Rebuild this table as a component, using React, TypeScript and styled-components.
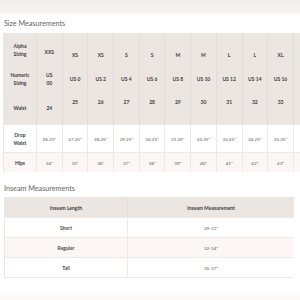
import styled, { createGlobalStyle } from "styled-components";

const GlobalStyle = createGlobalStyle`
    html, body {
        margin: 0;
        padding: 0;
        background: #ffffff;
        overflow: hidden;
        font-family: "Lato", "Liberation Sans", sans-serif;
    }
`;

type SizeCol = { alpha: string; num: string; waist: string; drop: string; hips: string };

const sizes: SizeCol[] = [
    { alpha: "XXS", num: "US\n00", waist: "24", drop: '26.25"', hips: '34"' },
    { alpha: "XS", num: "US 0", waist: "25", drop: '27.25"', hips: '35"' },
    { alpha: "XS", num: "US 2", waist: "26", drop: '28.25"', hips: '36"' },
    { alpha: "S", num: "US 4", waist: "27", drop: '29.25"', hips: '37"' },
    { alpha: "S", num: "US 6", waist: "28", drop: '30.25"', hips: '38"' },
    { alpha: "M", num: "US 8", waist: "29", drop: '31.25"', hips: '39"' },
    { alpha: "M", num: "US 10", waist: "30", drop: '32.25"', hips: '40"' },
    { alpha: "L", num: "US 12", waist: "31", drop: '33.25"', hips: '41"' },
    { alpha: "L", num: "US 14", waist: "32", drop: '34.25"', hips: '42"' },
    { alpha: "XL", num: "US 16", waist: "33", drop: '35.25"', hips: '43"' },
];

type Row = {
    label: string;
    key: keyof SizeCol;
    tone: "head" | "plain" | "tint";
    shift: number;
    firstShift: number;
};

const rows: Row[] = [
    { label: "Alpha Sizing", key: "alpha", tone: "head", shift: 5, firstShift: 2 },
    { label: "Numeric Sizing", key: "num", tone: "head", shift: 0, firstShift: 0 },
    { label: "Waist", key: "waist", tone: "head", shift: -6, firstShift: 0 },
    { label: "Drop Waist", key: "drop", tone: "plain", shift: 0, firstShift: 0 },
    { label: "Hips", key: "hips", tone: "tint", shift: 0, firstShift: 0 },
];

const inseam = [
    { length: "Short", measure: '29-31"' },
    { length: "Regular", measure: '32-34"' },
    { length: "Tall", measure: '35-37"' },
];

const tones = {
    head: "#ece6e2",
    plain: "#ffffff",
    tint: "#fcf7f5",
};

const App = () => {
    return (
        <Page>
            <GlobalStyle />
            <TopShade />
            <Section>
                <Title>Size Measurements</Title>
                <SizeTable>
                    {rows.map((r) => [
                        <Cell key={r.label} $tone={r.tone} $label $headRow={r.tone === "head"}>
                            {r.label}
                        </Cell>,
                        ...sizes.map((s, i) => (
                            <Cell
                                key={r.label + i}
                                $tone={r.tone}
                                $headRow={r.tone === "head"}
                                $shift={i === 0 ? r.firstShift : r.shift}
                            >
                                {s[r.key]}
                            </Cell>
                        )),
                        <Cell key={r.label + "-more"} $tone={r.tone} $headRow={r.tone === "head"} />,
                    ])}
                </SizeTable>

                <Title $gap>Inseam Measurements</Title>
                <InseamTable>
                    <InCell $tone="head" $bold>Inseam Length</InCell>
                    <InCell $tone="head" $bold>Inseam Measurement</InCell>
                    {inseam.map((r, i) => [
                        <InCell key={r.length} $tone={i === 1 ? "tint" : "plain"} $bold>
                            {r.length}
                        </InCell>,
                        <InCell key={r.measure} $tone={i === 1 ? "tint" : "plain"}>
                            {r.measure}
                        </InCell>,
                    ])}
                </InseamTable>
            </Section>
            <BottomShade />
        </Page>
    );
};

export default App;

const Page = styled.div`
    width: 300px;
    height: 300px;
    overflow: hidden;
    display: flex;
    flex-direction: column;
`;

const TopShade = styled.div`
    height: 16px;
    flex-shrink: 0;
    background: linear-gradient(#f1edeb, #f5f2f0 75%, #ffffff);
`;

const BottomShade = styled.div`
    flex: 1;
    background: linear-gradient(#ffffff, #ffffff 40%, #fcfaf9);
`;

const Section = styled.div`
    padding-left: 4px;
    display: flex;
    flex-direction: column;
`;

const Title = styled.div<{ $gap?: boolean }>`
    font-family: "Lato", "Liberation Sans", sans-serif;
    font-weight: 400;
    font-size: 7.2px;
    line-height: 10px;
    height: 10px;
    color: #666;
    margin-top: ${(p) => (p.$gap ? "12px" : "3px")};
    margin-bottom: ${(p) => (p.$gap ? "3px" : "4px")};
    white-space: nowrap;
`;

const SizeTable = styled.div`
    display: grid;
    grid-template-columns: 33px repeat(11, 25.7px);
    grid-template-rows: 34px 24px 33px 28px 20px;
    border-left: 1px solid #ebe6e3;
    border-bottom: 1px solid #ebe6e3;
    box-sizing: border-box;
    width: 330px;
    height: 139px;
    margin-left: -1px;
`;

const Cell = styled.div<{
    $tone: "head" | "plain" | "tint";
    $label?: boolean;
    $headRow?: boolean;
    $shift?: number;
}>`
    display: flex;
    align-items: center;
    justify-content: center;
    text-align: center;
    box-sizing: border-box;
    padding: 0 4px;
    padding-top: ${(p) => Math.max(0, (p.$shift ?? 0) * 2)}px;
    padding-bottom: ${(p) => Math.max(0, -(p.$shift ?? 0) * 2)}px;
    white-space: pre-line;
    background: ${(p) => tones[p.$tone]};
    border-right: 1px solid ${(p) => (p.$headRow ? "#e2dbd6" : "#ede9e6")};
    border-top: ${(p) => (p.$headRow ? "none" : "1px solid #ede9e6")};
    font-size: ${(p) => (p.$label || p.$headRow ? "5px" : "4.6px")};
    font-weight: ${(p) => (p.$label || p.$headRow ? 700 : 400)};
    line-height: 8px;
    color: ${(p) => (p.$label || p.$headRow ? "#3d3d3d" : "#5a5a5a")};
`;

const InseamTable = styled.div`
    display: grid;
    grid-template-columns: 123px 166px;
    grid-auto-rows: 20px;
    width: 289px;
    border: 1px solid #ebe6e3;
    border-top: none;
    box-sizing: border-box;
`;

const InCell = styled.div<{ $tone: "head" | "plain" | "tint"; $bold?: boolean }>`
    display: flex;
    align-items: center;
    justify-content: center;
    background: ${(p) => tones[p.$tone]};
    border-top: 1px solid ${(p) => (p.$tone === "head" ? "#ece6e2" : "#ede9e6")};
    &:nth-child(odd) {
        border-right: 1px solid ${(p) => (p.$tone === "head" ? "#e2dbd6" : "#ede9e6")};
    }
    font-size: ${(p) => (p.$bold ? "5px" : "4.6px")};
    font-weight: 700;
    font-weight: ${(p) => (p.$bold ? 700 : 400)};
    color: ${(p) => (p.$tone === "head" ? "#3d3d3d" : p.$bold ? "#4a4a4a" : "#5a5a5a")};
`;
